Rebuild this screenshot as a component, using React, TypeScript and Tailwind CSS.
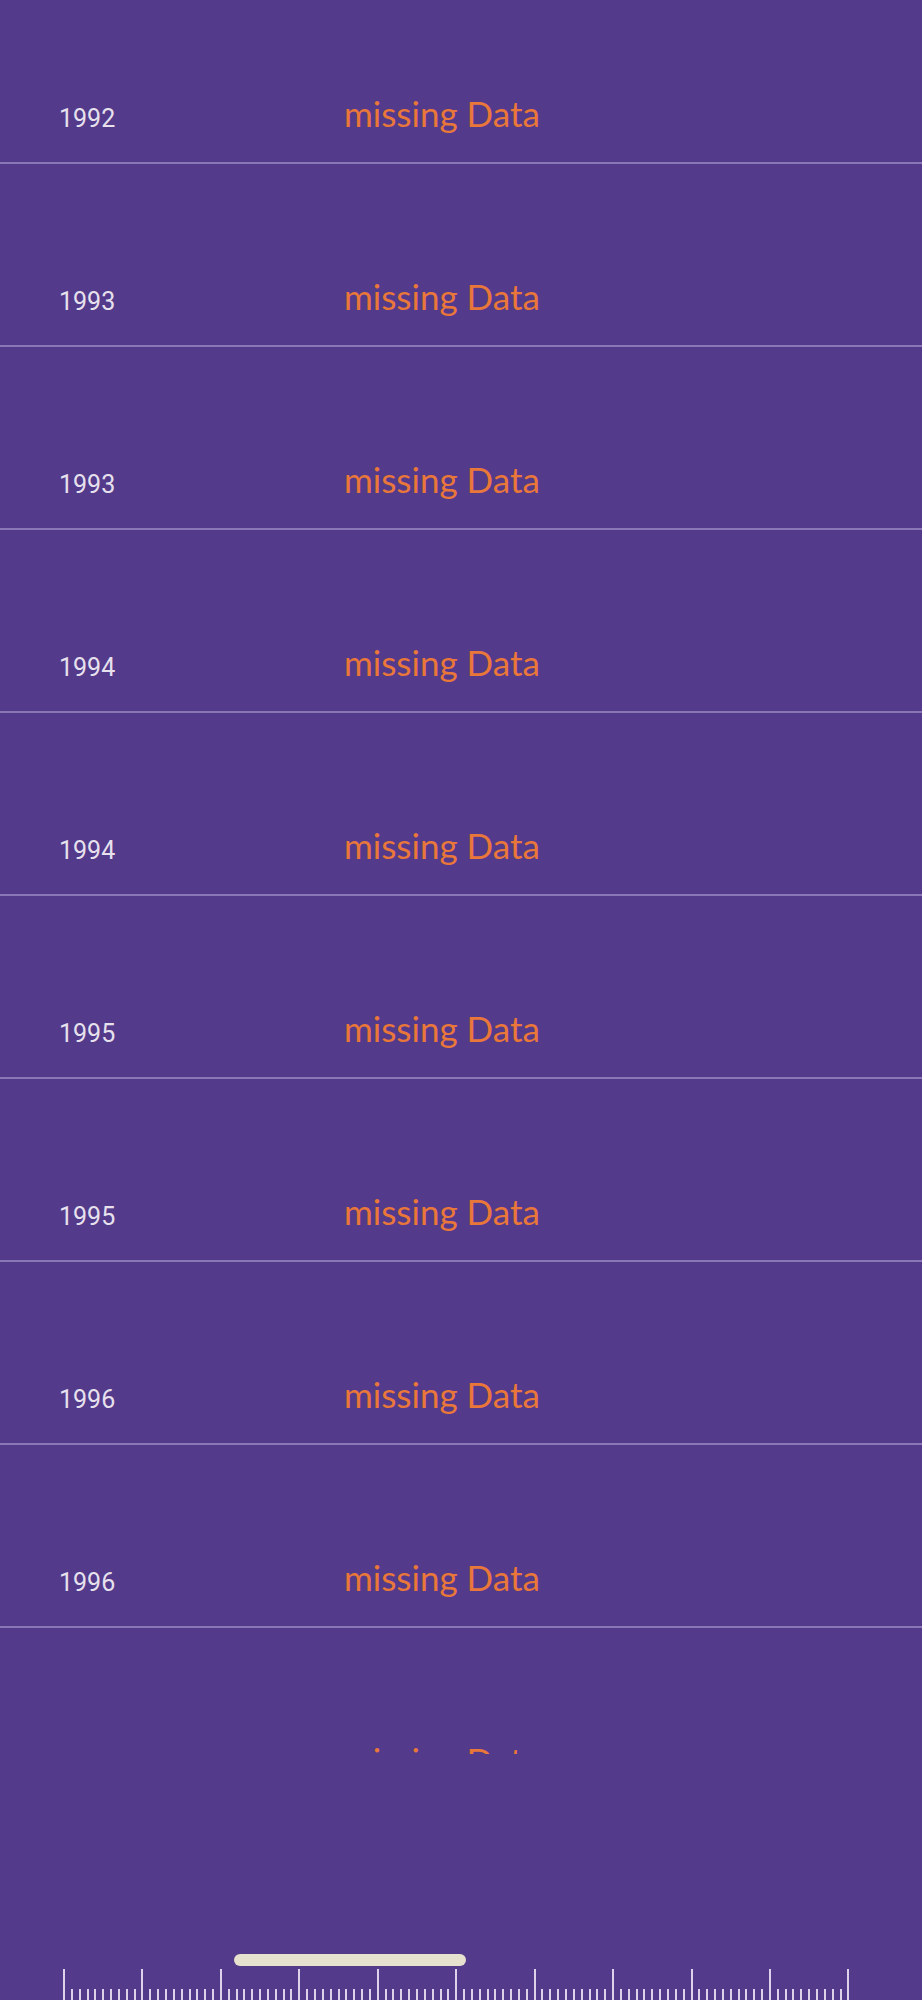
import React from "react";

type Row = {
  year: number;
  value: string | null;
};

const rows: Row[] = [
  { year: 1992, value: null },
  { year: 1993, value: null },
  { year: 1993, value: null },
  { year: 1994, value: null },
  { year: 1994, value: null },
  { year: 1995, value: null },
  { year: 1995, value: null },
  { year: 1996, value: null },
  { year: 1996, value: null },
  { year: 1997, value: null },
];

function YearRow({ row, last }: { row: Row; last?: boolean }) {
  return (
    <div
      className={`flex items-baseline h-[183px] shrink-0 pt-[114px] pl-[59px] ${
        last ? "" : "border-b-2 border-[#8a78b6]"
      }`}
    >
      <span
        className={`w-[285px] shrink-0 text-[25px] leading-[36px] text-[#e7e1ee] ${
          last ? "invisible" : ""
        }`}
        style={{ fontFamily: "Roboto, sans-serif" }}
      >
        {row.year}
      </span>
      <span
        className="text-[35px] leading-[36px] text-[#e9773a]"
        style={{ fontFamily: "Lato, sans-serif" }}
      >
        {row.value ?? "missing Data"}
      </span>
    </div>
  );
}

function Ruler() {
  const ticks = Array.from({ length: 101 }, (_, i) => i);
  return (
    <div className="flex justify-between items-end w-[787px] h-[31px]">
      {ticks.map((i) => (
        <div
          key={i}
          className={`w-[2px] bg-[#ddd2ea] ${i % 10 === 0 ? "h-[31px]" : "h-[11px]"}`}
        />
      ))}
    </div>
  );
}

export default function App() {
  return (
    <div className="w-full h-[2000px] bg-[#533a8a] flex flex-col overflow-hidden">
      {/* scrolled list */}
      <div className="h-[1754px] shrink-0 overflow-hidden">
        <div className="flex flex-col -mt-[19px]">
          {rows.map((row, i) => (
            <YearRow key={i} row={row} last={i === rows.length - 1} />
          ))}
        </div>
      </div>

      {/* timeline scrubber */}
      <div className="flex-1 flex flex-col justify-end pl-[63px]">
        <div className="pl-[171px] mb-[3px]">
          <div className="w-[232px] h-[12px] rounded-full bg-[#e6e0cf]" />
        </div>
        <Ruler />
      </div>
    </div>
  );
}
